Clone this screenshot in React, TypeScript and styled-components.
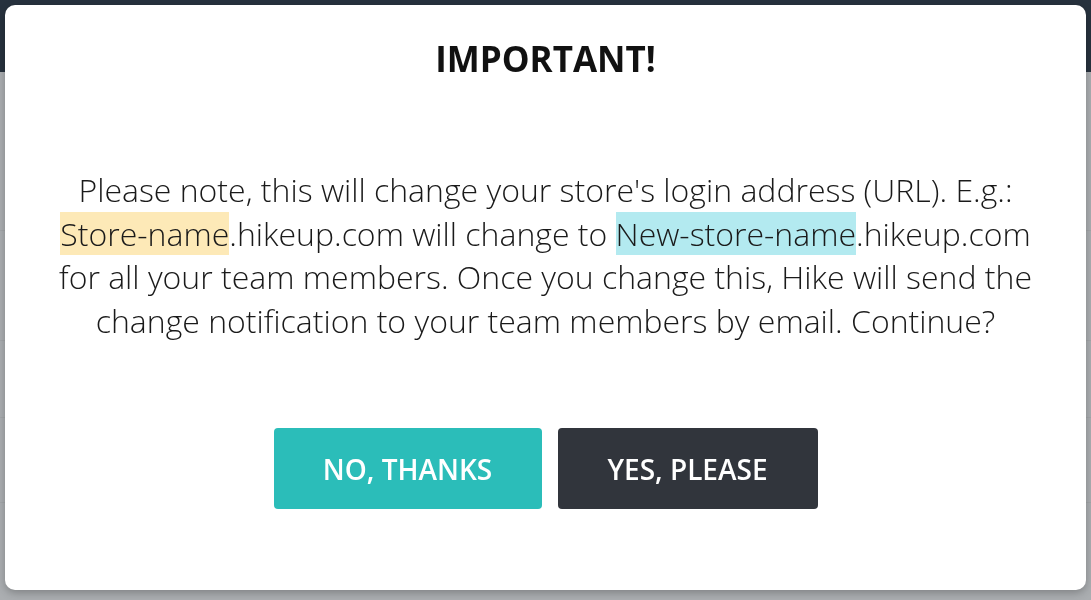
import React from 'react';
import styled, { createGlobalStyle } from 'styled-components';

const GlobalStyle = createGlobalStyle`
  html, body {
    margin: 0;
    padding: 0;
    background: #abaeb1;
    font-family: 'Open Sans', 'Noto Sans', sans-serif;
  }
`;

// Dimmed page behind the dialog
const Page = styled.div`
  width: 100%;
  height: 600px;
  overflow: hidden;
  background: #abaeb1;
`;

const TopBar = styled.div`
  height: 72px;
  background: #27323e;
`;

const Row = styled.div<{ h: number }>`
  height: ${p => p.h}px;
  border-bottom: 1px solid #a3a6a9;
`;

const Overlay = styled.div`
  position: fixed;
  inset: 0;
  padding: 5px 5px 10px 5px;
  box-sizing: border-box;
`;

const Modal = styled.div`
  height: 100%;
  background: #ffffff;
  border-radius: 10px;
  box-shadow: 0 3px 8px rgba(0, 0, 0, 0.25);
  display: flex;
  flex-direction: column;
  align-items: center;
  padding: 32px 40px 0;
  box-sizing: border-box;
`;

const Title = styled.h2`
  margin: 0;
  font-size: 35px;
  font-weight: 700;
  color: #111111;
  line-height: 44px;
`;

const Message = styled.p`
  margin: 87px 0 0;
  font-size: 32px;
  font-weight: 300;
  line-height: 43.5px;
  color: #1a1a1a;
  text-align: center;
  white-space: nowrap;
`;

const Mark = styled.span<{ tone: 'old' | 'new' }>`
  background: ${p => (p.tone === 'old' ? '#fde9b7' : '#b3eaf0')};
`;

const Actions = styled.div`
  display: flex;
  gap: 16px;
  margin-top: 86px;
`;

const Button = styled.button<{ variant: 'primary' | 'dark' }>`
  height: 81px;
  width: ${p => (p.variant === 'primary' ? 268 : 260)}px;
  border: none;
  border-radius: 4px;
  background: ${p => (p.variant === 'primary' ? '#2bbdb9' : '#31353c')};
  color: #ffffff;
  font-family: 'Open Sans', 'Noto Sans', sans-serif;
  font-size: 28px;
  font-weight: 600;
  cursor: pointer;
`;

const App: React.FC = () => {
  return (
    <>
      <GlobalStyle />
      <Page>
        <TopBar />
        <Row h={158} />
        <Row h={109} />
        <Row h={76} />
        <Row h={84} />
      </Page>
      <Overlay>
        <Modal role="dialog">
          <Title>IMPORTANT!</Title>
          <Message>
            Please note, this will change your store's login address (URL). E.g.:
            <br />
            <Mark tone="old">Store-name</Mark>.hikeup.com will change to{' '}
            <Mark tone="new">New-store-name</Mark>.hikeup.com
            <br />
            for all your team members. Once you change this, Hike will send the
            <br />
            change notification to your team members by email. Continue?
          </Message>
          <Actions>
            <Button variant="primary">NO, THANKS</Button>
            <Button variant="dark">YES, PLEASE</Button>
          </Actions>
        </Modal>
      </Overlay>
    </>
  );
};

export default App;
